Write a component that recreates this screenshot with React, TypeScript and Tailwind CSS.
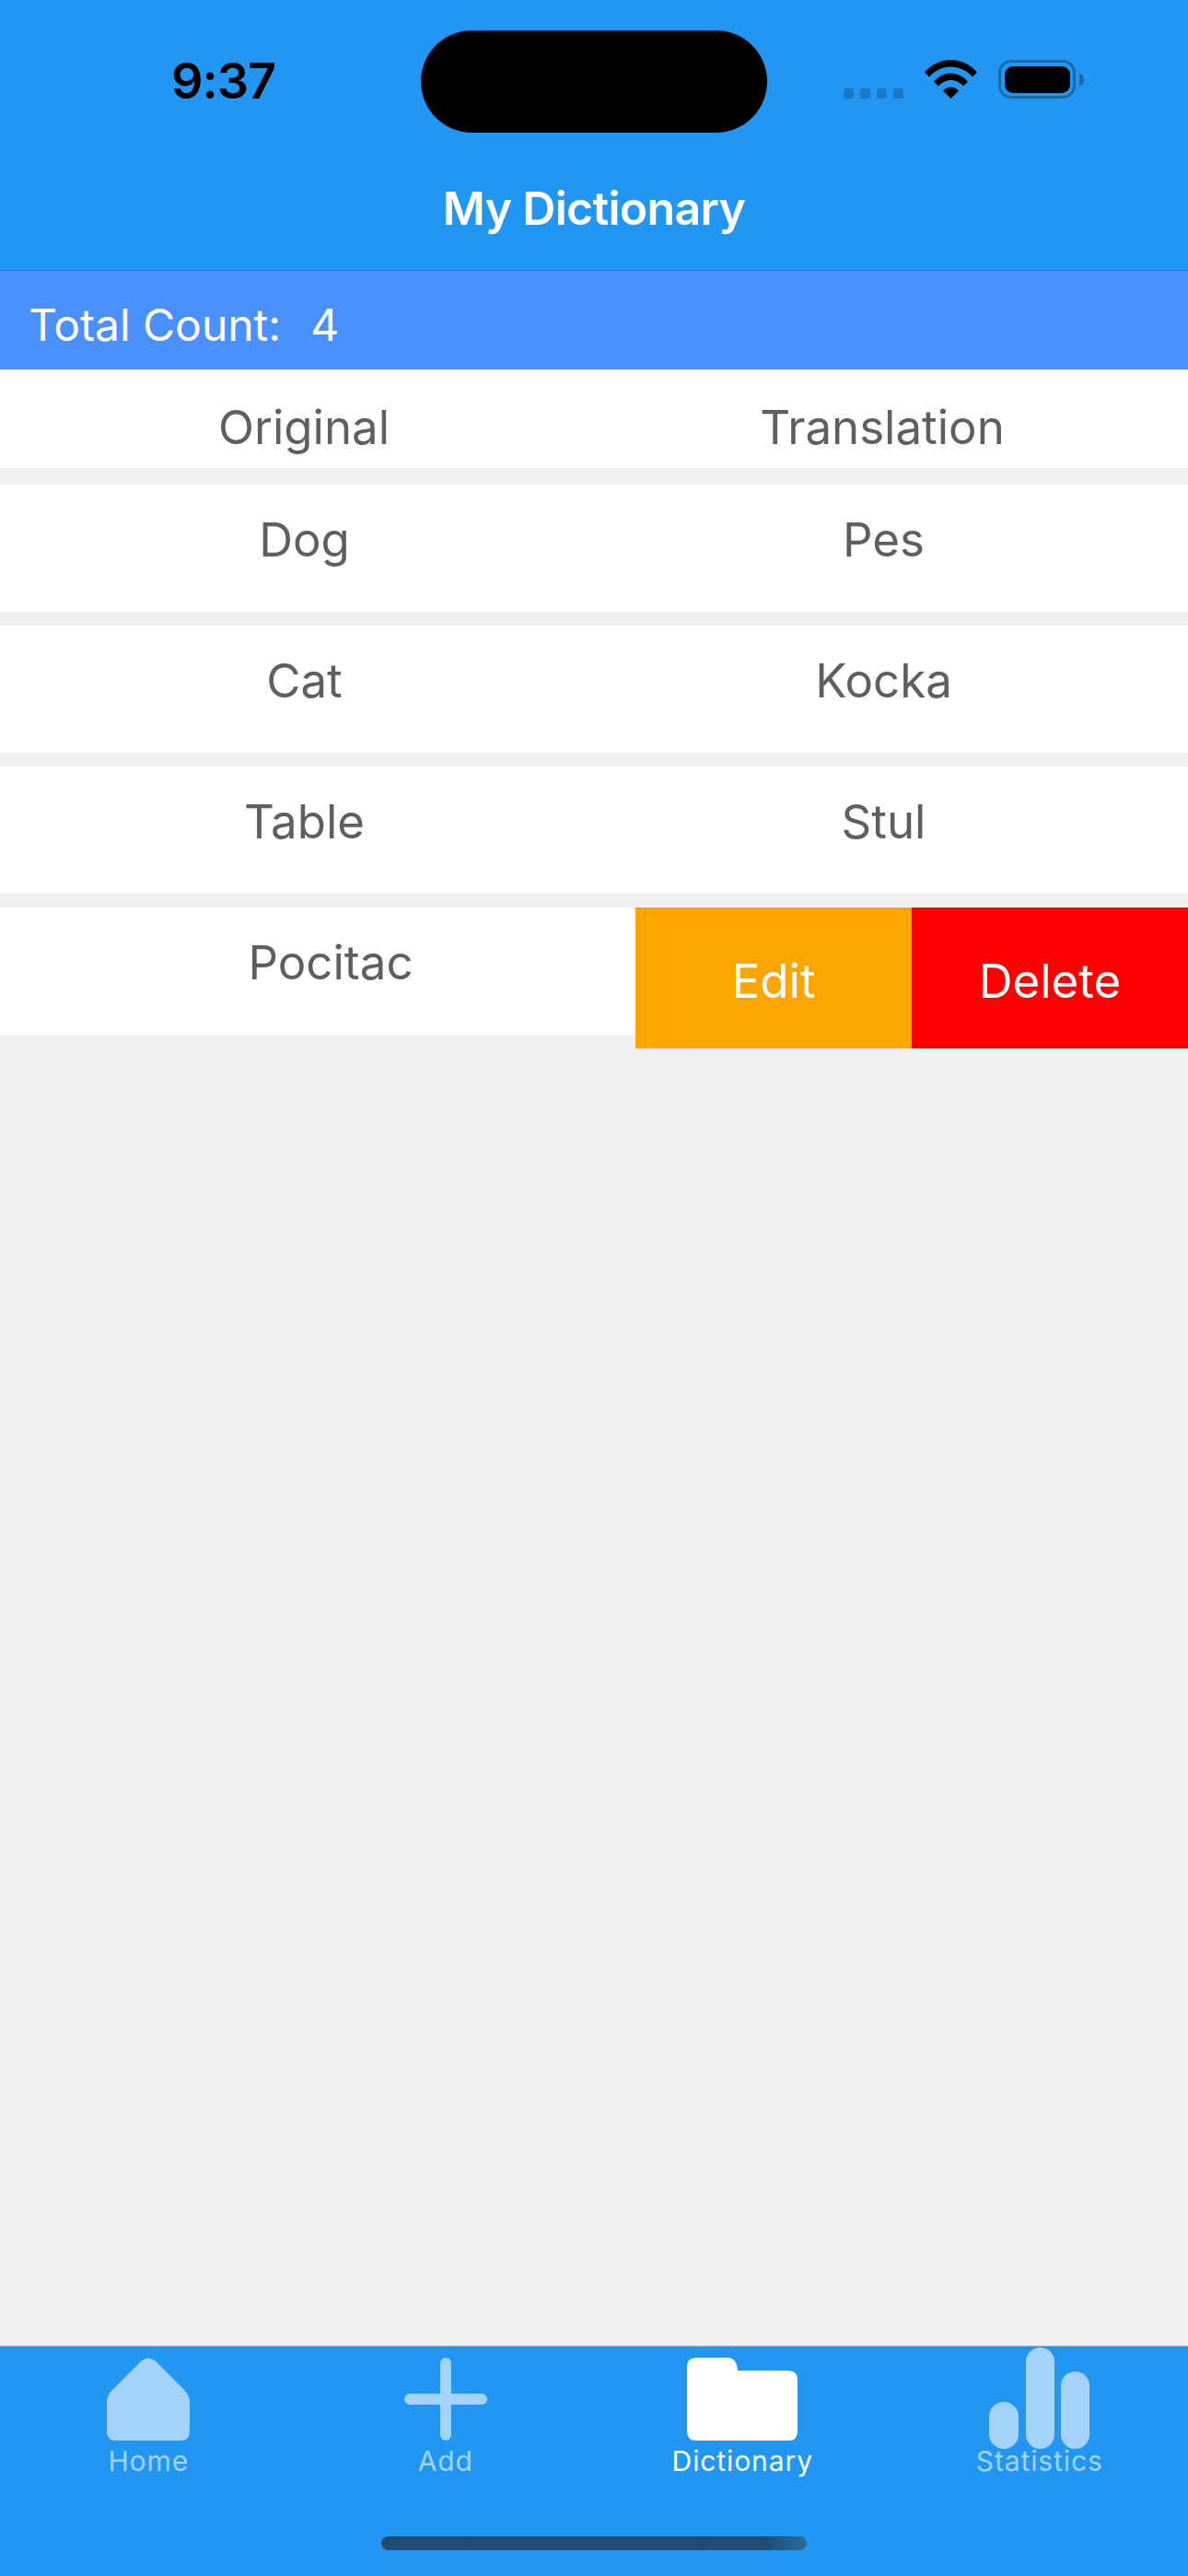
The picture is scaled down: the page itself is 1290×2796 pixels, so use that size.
const rows = [
  { original: "Dog", translation: "Pes" },
  { original: "Cat", translation: "Kocka" },
  { original: "Table", translation: "Stul" },
];

function Wifi() {
  return (
    <svg width="57" height="42" viewBox="0 0 57 42" className="block">
      <path d="M0 13.5C7.5 5 17.500 0 28.500 0S49.500 5 57 13.500L52 18.500C46 11.500 37.500 7.500 28.500 7.500S11 11.500 5 18.500Z" fill="#000" />
      <path d="M10 23.500C15 18 21.500 14.500 28.500 14.500S42 18 47 23.500L42 28.500C38.500 24.500 33.500 22 28.500 22S18.500 24.500 15 28.500Z" fill="#000" />
      <path d="M20 33.500C22.500 31 25.500 29.500 28.500 29.500S34.500 31 37 33.500L28.500 42Z" fill="#000" />
    </svg>
  );
}

function HomeIcon() {
  return (
    <svg width="90" height="90" viewBox="0 0 90 90" className="block">
      <path d="M38 3Q45 -2 52 3L84 35Q90 41 90 48V80Q90 90 80 90H10Q0 90 0 80V48Q0 41 6 35Z" fill="#a3d3fb" />
    </svg>
  );
}

function PlusIcon() {
  return (
    <svg width="90" height="90" viewBox="0 0 90 90" className="block">
      <rect x="39" y="0" width="12" height="90" rx="6" fill="#a3d3fb" />
      <rect x="0" y="39" width="90" height="12" rx="6" fill="#a3d3fb" />
    </svg>
  );
}

function FolderIcon() {
  return (
    <svg width="120" height="90" viewBox="0 0 120 90" className="block">
      <path d="M10 0H44Q54 0 55 14H110Q120 14 120 24V80Q120 90 110 90H10Q0 90 0 80V10Q0 0 10 0Z" fill="#fff" />
    </svg>
  );
}

function StatsIcon() {
  return (
    <svg width="110" height="110" viewBox="0 0 110 110" className="block">
      <rect x="0" y="59" width="32" height="51" rx="16" fill="#a3d3fb" />
      <rect x="40" y="0" width="31" height="110" rx="15.500" fill="#a3d3fb" />
      <rect x="78" y="26" width="31" height="84" rx="15.500" fill="#a3d3fb" />
    </svg>
  );
}

function Tab({ label, active, children }: { label: string; active?: boolean; children: React.ReactNode }) {
  return (
    <div className="flex flex-1 flex-col items-center">
      <div className="flex h-[90px] items-start justify-center">{children}</div>
      <span className={`mt-[4px] text-[30px] leading-[36px] tracking-[0.9px] ${active ? "text-white" : "text-[#a3d3fb]"}`}>
        {label}
      </span>
    </div>
  );
}

export default function App() {
  return (
    <div className="flex h-[2796px] w-[1290px] flex-col overflow-hidden bg-[#f0f0f0] font-['Inter',sans-serif]">
      {/* Header */}
      <header className="h-[294px] border-b border-[#1f78c4] bg-[#2196f3]">
        <div className="flex h-[195px] items-start">
          <div className="w-[457px] pl-[186px] pt-[58px] text-[54px] leading-[60px] font-semibold tracking-[-1px] text-black">
            9:37
          </div>
          <div className="mt-[33px] h-[111px] w-[376px] rounded-full bg-black" />
          <div className="flex pl-[83px] pt-[65px]">
            <div className="mt-[31px] flex h-[11px] gap-[7px]">
              <span className="h-[11px] w-[11px] rounded-[3px] bg-[#1a78c4]" />
              <span className="h-[11px] w-[11px] rounded-[3px] bg-[#1a78c4]" />
              <span className="h-[11px] w-[11px] rounded-[3px] bg-[#1a78c4]" />
              <span className="h-[11px] w-[11px] rounded-[3px] bg-[#1a78c4]" />
            </div>
            <div className="ml-[23px]">
              <Wifi />
            </div>
            <div className="ml-[23px] flex items-center">
              <div className="flex h-[42px] w-[84px] items-center justify-center rounded-[14px] border-[3px] border-[#1a6aa8]">
                <div className="h-[29px] w-[71px] rounded-[9px] bg-black" />
              </div>
              <div className="ml-[4px] h-[13px] w-[5px] rounded-r-full bg-[#1a6aa8]" />
            </div>
          </div>
        </div>
        <h1 className="text-center text-[50px] leading-[62px] font-semibold tracking-[-0.7px] text-white">My Dictionary</h1>
      </header>

      {/* Count */}
      <div className="flex h-[107px] items-center bg-[#4a90ff] pl-[31px] pt-[10px] text-[48px] text-white">
        <span>Total Count:</span>
        <span className="ml-[32px]">4</span>
      </div>

      {/* Table head */}
      <div className="mb-[18px] grid h-[107px] grid-cols-2 items-center bg-white pt-[20px] pr-[18px] pl-[16px] text-center text-[51px] text-[#5f5f5f]">
        <span>Original</span>
        <span>Translation</span>
      </div>

      {/* Rows */}
      <div className="flex flex-col gap-[15px]">
        {rows.map((row) => (
          <div
            key={row.original}
            className="grid h-[138px] grid-cols-2 items-start bg-white pt-[29px] pr-[16px] pl-[16px] text-center text-[51px] leading-[62px] text-[#5f5f5f]"
          >
            <span>{row.original}</span>
            <span>{row.translation}</span>
          </div>
        ))}

        {/* Swiped row */}
        <div className="flex h-[153px] items-start">
          <div className="h-[138px] w-[690px] bg-white pl-[28px] pt-[29px] text-center text-[51px] leading-[62px] text-[#5f5f5f]">
            Pocitac
          </div>
          <div className="flex h-[153px] w-[300px] items-center justify-center bg-[#ffa500] pt-[7px] text-[51px] text-white">
            Edit
          </div>
          <div className="flex h-[153px] w-[300px] items-center justify-center bg-[#ff0000] pt-[7px] text-[51px] text-white">
            Delete
          </div>
        </div>
      </div>

      <div className="flex-1" />

      {/* Tab bar */}
      <nav className="h-[250px] border-t border-[#a8a8a8] bg-[#2196f3]">
        <div className="flex pt-[12px]">
          <Tab label="Home">
            <HomeIcon />
          </Tab>
          <Tab label="Add">
            <PlusIcon />
          </Tab>
          <Tab label="Dictionary" active>
            <FolderIcon />
          </Tab>
          <Tab label="Statistics">
            <div className="-mt-[11px]">
              <StatsIcon />
            </div>
          </Tab>
        </div>
        <div className="mx-auto mt-[64px] h-[15px] w-[462px] rounded-full bg-linear-to-r from-[#214c70] from-90% to-[#2a6ba0]" />
      </nav>
    </div>
  );
}
